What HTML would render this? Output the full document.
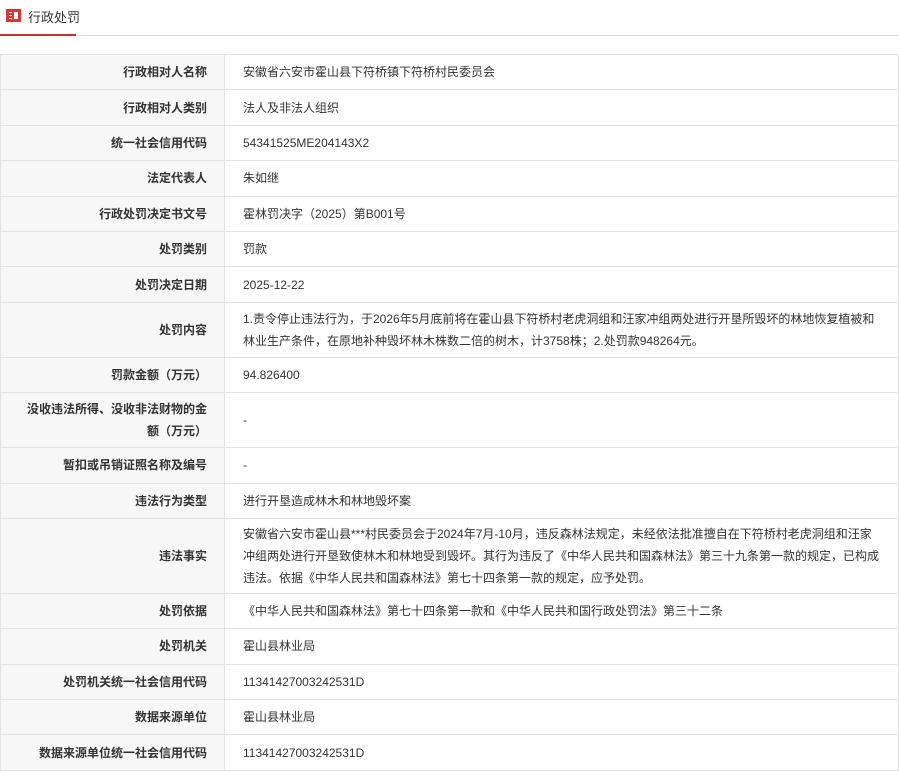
<!DOCTYPE html>
<html><head><meta charset="utf-8"><style>
body{margin:0;background:#fff;font-family:"Liberation Sans","Noto Sans CJK SC",sans-serif;font-size:12px;color:#333;width:899px;overflow:hidden}
.hd{position:relative;height:35px;border-bottom:1px solid #ddd}
.hd .t{position:absolute;left:28px;top:7px;font-size:13px;color:#333}
.hd .u{position:absolute;left:0;bottom:-1px;width:76px;height:2px;background:#c9302c}
.ic{position:absolute;left:6px;top:9px;width:13px;height:11px;border:1px solid #d43a33;background:#d43a33}
.ic i{position:absolute;background:#fff}
table{position:absolute;top:54px;left:0;width:899px;border-collapse:collapse}
td{border:1px solid #e3e3e3;padding:0 18px;line-height:22px}
td.l{width:188px;background:#f7f7f7;text-align:right;font-weight:bold;color:#333;padding:0 17px 0 18px}
tr{height:35.4px}
</style></head><body>
<div class="hd"><div class="ic"><i style="left:2px;top:2px;width:3px;height:1px"></i><i style="left:2px;top:5px;width:3px;height:1px"></i><i style="left:2px;top:8px;width:3px;height:1px"></i><i style="left:7px;top:2px;width:4px;height:7px"></i></div><span class="t">行政处罚</span><div class="u"></div></div>
<table>
<tr><td class="l">行政相对人名称</td><td>安徽省六安市霍山县下符桥镇下符桥村民委员会</td></tr>
<tr><td class="l">行政相对人类别</td><td>法人及非法人组织</td></tr>
<tr><td class="l">统一社会信用代码</td><td>54341525ME204143X2</td></tr>
<tr><td class="l">法定代表人</td><td>朱如继</td></tr>
<tr><td class="l">行政处罚决定书文号</td><td>霍林罚决字（2025）第B001号</td></tr>
<tr><td class="l">处罚类别</td><td>罚款</td></tr>
<tr><td class="l">处罚决定日期</td><td>2025-12-22</td></tr>
<tr style="height:55px"><td class="l">处罚内容</td><td>1.责令停止违法行为，于2026年5月底前将在霍山县下符桥村老虎洞组和汪家冲组两处进行开垦所毁坏的林地恢复植被和林业生产条件，在原地补种毁坏林木株数二倍的树木，计3758株；2.处罚款948264元。</td></tr>
<tr><td class="l">罚款金额（万元）</td><td>94.826400</td></tr>
<tr style="height:55px"><td class="l">没收违法所得、没收非法财物的金额（万元）</td><td>-</td></tr>
<tr><td class="l">暂扣或吊销证照名称及编号</td><td>-</td></tr>
<tr><td class="l">违法行为类型</td><td>进行开垦造成林木和林地毁坏案</td></tr>
<tr style="height:75px"><td class="l">违法事实</td><td>安徽省六安市霍山县***村民委员会于2024年7月-10月，违反森林法规定，未经依法批准擅自在下符桥村老虎洞组和汪家冲组两处进行开垦致使林木和林地受到毁坏。其行为违反了《中华人民共和国森林法》第三十九条第一款的规定，已构成违法。依据《中华人民共和国森林法》第七十四条第一款的规定，应予处罚。</td></tr>
<tr><td class="l">处罚依据</td><td>《中华人民共和国森林法》第七十四条第一款和《中华人民共和国行政处罚法》第三十二条</td></tr>
<tr><td class="l">处罚机关</td><td>霍山县林业局</td></tr>
<tr><td class="l">处罚机关统一社会信用代码</td><td>11341427003242531D</td></tr>
<tr><td class="l">数据来源单位</td><td>霍山县林业局</td></tr>
<tr><td class="l">数据来源单位统一社会信用代码</td><td>11341427003242531D</td></tr>
</table>
</body></html>
